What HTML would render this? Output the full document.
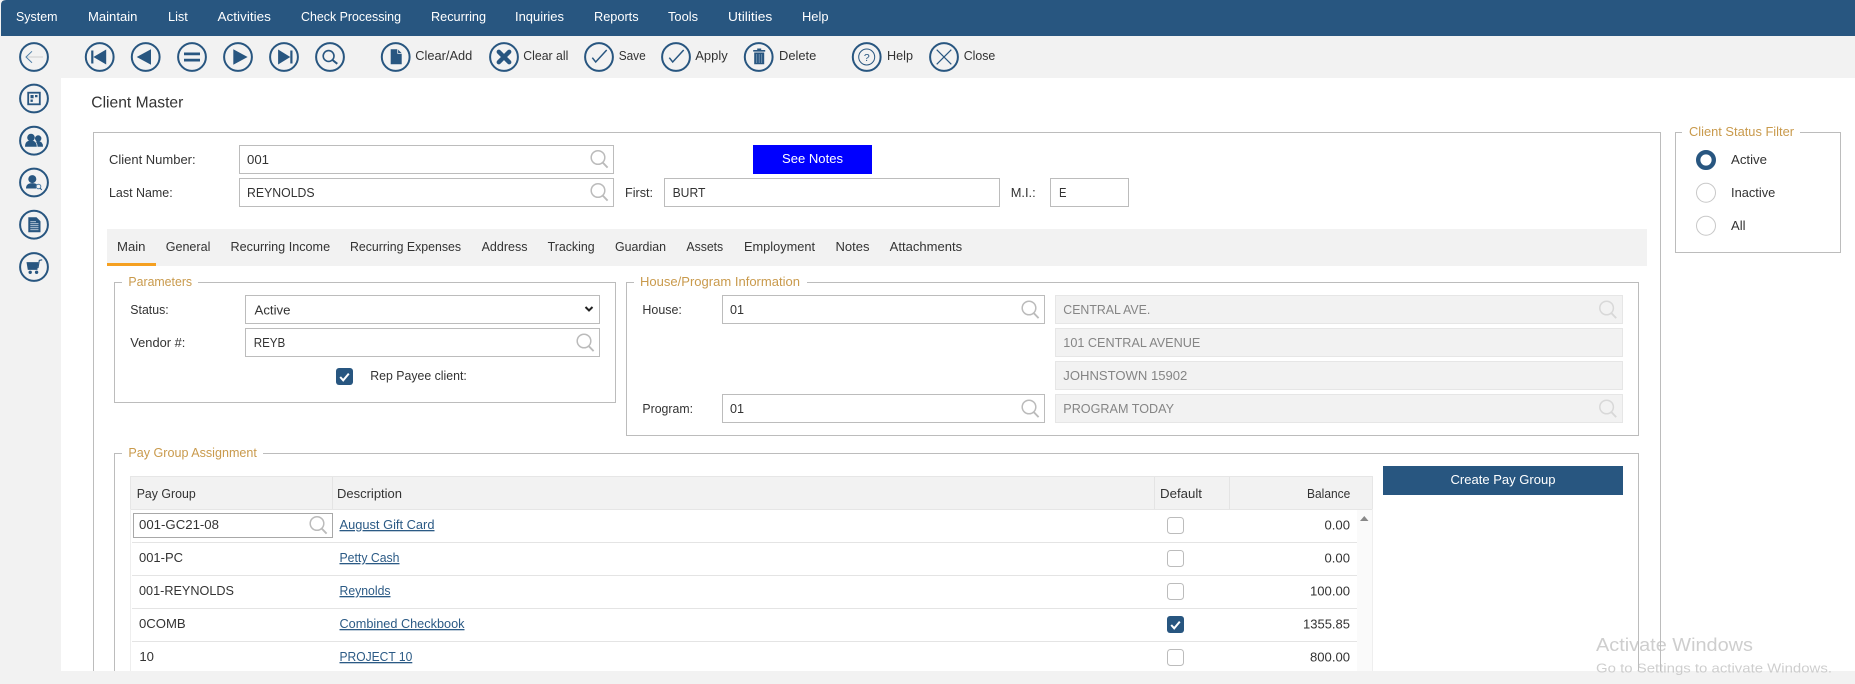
<!DOCTYPE html>
<html lang="en">
<head>
<meta charset="utf-8">
<title>Client Master</title>
<style>
html,body{margin:0;padding:0;width:1855px;height:684px;overflow:hidden;background:#f2f2f2}
svg{display:block}
text{font-family:"Liberation Sans",Arial,sans-serif;font-size:13px;fill:#333}
.m text{fill:#fff}
.l text{fill:#c99a4c}
.g text{fill:#858585}
.u{text-decoration:underline;fill:#2b5a85}
.b{fill:#fff;stroke:#bcbcbc;stroke-width:1}
.d{fill:#f2f2f2;stroke:#e6e6e6;stroke-width:1}
.c{fill:none;stroke:#285680;stroke-width:2}
.q{fill:#285680}
</style>
</head>
<body>
<svg xmlns="http://www.w3.org/2000/svg" width="1855" height="684" viewBox="0 0 1855 684">
<defs>
<g id="ci"><circle r="13.9" class="c"/></g>
<g id="mag" fill="none" stroke="#bbb" stroke-width="1.5"><circle cx="-1" cy="-1.5" r="6.8"/><path d="M3.8 3.6L8.6 8.6" stroke-width="1.9"/></g>
<g id="magd" fill="none" stroke="#d8d8d8" stroke-width="1.5"><circle cx="-1" cy="-1.5" r="6.8"/><path d="M3.8 3.6L8.6 8.6" stroke-width="1.9"/></g>
<g id="cb"><rect x=".5" y=".5" width="16" height="16" rx="3" fill="#fff" stroke="#bcbcbc"/></g>
<g id="cc"><rect width="17" height="17" rx="3" fill="#285680"/><path d="M4.2 9L7.2 12.3L12.8 5.6" fill="none" stroke="#fff" stroke-width="2"/></g>
</defs>

<rect width="1855" height="684" fill="#f2f2f2"/>
<!-- menu -->
<path d="M1 5Q1 0 6 0H1855V36H1V5Z" fill="#285680"/>
<g class="m">
<text x="16" y="21" textLength="41.5" lengthAdjust="spacingAndGlyphs">System</text>
<text x="88" y="21" textLength="49.4" lengthAdjust="spacingAndGlyphs">Maintain</text>
<text x="168" y="21" textLength="19.8" lengthAdjust="spacingAndGlyphs">List</text>
<text x="217.5" y="21" textLength="53.4" lengthAdjust="spacingAndGlyphs">Activities</text>
<text x="301" y="21" textLength="100" lengthAdjust="spacingAndGlyphs">Check Processing</text>
<text x="431" y="21" textLength="55" lengthAdjust="spacingAndGlyphs">Recurring</text>
<text x="515" y="21" textLength="49" lengthAdjust="spacingAndGlyphs">Inquiries</text>
<text x="594" y="21" textLength="44.6" lengthAdjust="spacingAndGlyphs">Reports</text>
<text x="668" y="21" textLength="30" lengthAdjust="spacingAndGlyphs">Tools</text>
<text x="728" y="21" textLength="44.3" lengthAdjust="spacingAndGlyphs">Utilities</text>
<text x="802" y="21" textLength="26.5" lengthAdjust="spacingAndGlyphs">Help</text>
</g>

<!-- content area -->
<rect x="61" y="78" width="1794" height="593" fill="#fff"/>

<!-- toolbar icons -->
<g transform="translate(34,57)"><use href="#ci"/><path d="M-7 0H9" stroke="#dcdcdc" stroke-width="1.6"/><path d="M-2 -5.7L-8 0L-2 5.7" fill="none" stroke="#4f7ea6" stroke-width="1"/></g>
<g transform="translate(99.7,57)"><use href="#ci"/><path class="q" d="M-8.5-6.5H-6.3V6.5H-8.5ZM-6.3 0L6.5-7.5V7.5Z"/></g>
<g transform="translate(145.7,57)"><use href="#ci"/><path class="q" d="M-9 0L5.3-7.8V7.8Z"/></g>
<g transform="translate(192,57)"><use href="#ci"/><path class="q" d="M-8-4.5H8V-1.7H-8ZM-8 1.7H8V4.5H-8Z"/></g>
<g transform="translate(238,57)"><use href="#ci"/><path class="q" d="M-4.7-7.8L9.6 0L-4.7 7.8Z"/></g>
<g transform="translate(284,57)"><use href="#ci"/><path class="q" d="M-5.9-7.5L6.3 0V-6.5H8.5V6.5H6.3V0L-5.9 7.5Z"/></g>
<g transform="translate(330,57)"><use href="#ci"/><circle cx="-1.4" cy="-1" r="5.4" fill="none" stroke="#285680" stroke-width="1.6"/><path d="M2.5 3L7.3 6.8" stroke="#285680" stroke-width="2"/></g>
<g transform="translate(395.7,57)"><use href="#ci"/><path class="q" d="M-5-7.7H1.6V-3.2H6V7.3H-5Z"/><path class="q" d="M2.4-7.4L5.8-4H2.4Z"/></g>
<g transform="translate(504,57)"><use href="#ci"/><path d="M-5.2-5.2L5.2 5.2M5.2-5.2L-5.2 5.2" stroke="#285680" stroke-width="4.4" stroke-linecap="round"/></g>
<g transform="translate(599,57)"><use href="#ci"/><path d="M-6.7.7L-3.3 5L7.7-7" fill="none" stroke="#285680" stroke-width="1.5"/></g>
<g transform="translate(676,57)"><use href="#ci"/><path d="M-6.7.7L-3.3 5L7.7-7" fill="none" stroke="#285680" stroke-width="1.5"/></g>
<g transform="translate(758.7,57)"><use href="#ci"/><path class="q" d="M-4.5-4.5H5.5V7.3H-4.5ZM-5.5-7H-1.5V-8.5H2.5V-7H6.5V-5.4H-5.5Z"/><path d="M-2 -3V6M.5 -3V6M3 -3V6" stroke="#7f9db8" stroke-width=".8"/></g>
<g transform="translate(866.7,57)"><use href="#ci"/><circle r="8" fill="none" stroke="#285680" stroke-width="1"/><text x="-2.8" y="3.9" style="font-size:10.5px;fill:#285680">?</text></g>
<g transform="translate(944,57)"><use href="#ci"/><path d="M-7.3-7.3L7.3 7.3M7.3-7.3L-7.3 7.3" stroke="#285680" stroke-width="1.2"/></g>

<text x="415.3" y="60" textLength="57" lengthAdjust="spacingAndGlyphs">Clear/Add</text>
<text x="523.3" y="60" textLength="45" lengthAdjust="spacingAndGlyphs">Clear all</text>
<text x="618.7" y="60" textLength="27" lengthAdjust="spacingAndGlyphs">Save</text>
<text x="695.3" y="60" textLength="32.4" lengthAdjust="spacingAndGlyphs">Apply</text>
<text x="779" y="60" textLength="37.3" lengthAdjust="spacingAndGlyphs">Delete</text>
<text x="887" y="60" textLength="26" lengthAdjust="spacingAndGlyphs">Help</text>
<text x="963.7" y="60" textLength="31.6" lengthAdjust="spacingAndGlyphs">Close</text>

<!-- sidebar icons -->
<g transform="translate(34,98.5)"><use href="#ci"/><rect x="-5.8" y="-5.8" width="11.6" height="11.6" fill="none" stroke="#285680" stroke-width="1.8"/><path class="q" d="M-3.5-3.5H-.4V-.3H-3.5ZM1-3.5H3.5V-1.2H1ZM-3.5 1H-1.2V3.4H-3.5Z"/></g>
<g transform="translate(34,140.7)"><use href="#ci"/><circle cx="-3" cy="-3.2" r="3.8" class="q"/><path class="q" d="M-9 6Q-9 -.2-3 -.2Q2.5 -.2 2.8 6Z"/><circle cx="4.2" cy="-2.2" r="3.2" class="q"/><path class="q" d="M3.6 6Q3.4 2.6 1.8 1Q2.8 .5 4.4 .5Q9 .5 9 6Z"/></g>
<g transform="translate(34,182.5)"><use href="#ci"/><circle cx="-1.7" cy="-3.4" r="4" class="q"/><path class="q" d="M-8 6Q-8 .6-1.7 .6Q1.5 .6 3.2 2.2Q1.8 3.6 2 6Z"/><circle cx="4.5" cy="4" r="2.3" fill="none" stroke="#4f7ea6" stroke-width="1"/><path d="M6 5.6L7.8 7.4" stroke="#285680" stroke-width="1"/></g>
<g transform="translate(34,224.7)"><use href="#ci"/><path class="q" d="M-5.7-7.5H2.5L6.5-3.5V7.5H-5.7Z"/><path d="M-3.7-3H2M-3.7-1H4.5M-3.7 1H4.5M-3.7 3H4.5M-3.7 5H4.5" stroke="#c4d2df" stroke-width=".9"/></g>
<g transform="translate(34,267)"><use href="#ci"/><path class="q" d="M-7.5-4.9H4.4L3.4 2.9H-6.2Z"/><path d="M4 1L5.3-6.6L8.2-7.2" fill="none" stroke="#285680" stroke-width="1.1"/><circle cx="-3.8" cy="5.3" r="1.7" class="q"/><circle cx="2.6" cy="5.3" r="1.7" class="q"/></g>

<!-- title -->
<text x="91.3" y="107.3" style="font-size:16px" textLength="92" lengthAdjust="spacingAndGlyphs">Client Master</text>

<!-- main box -->
<rect x="93.5" y="132.5" width="1567" height="560" class="b"/>

<!-- header fields -->
<text x="109" y="164" textLength="86.6" lengthAdjust="spacingAndGlyphs">Client Number:</text>
<rect x="239.5" y="145.5" width="374" height="28" class="b"/>
<text x="247" y="164" textLength="22" lengthAdjust="spacingAndGlyphs">001</text>
<use href="#mag" x="599" y="159"/>
<text x="109" y="197" textLength="63.7" lengthAdjust="spacingAndGlyphs">Last Name:</text>
<rect x="239.5" y="178.5" width="374" height="28" class="b"/>
<text x="247" y="197" textLength="67.6" lengthAdjust="spacingAndGlyphs">REYNOLDS</text>
<use href="#mag" x="599" y="192"/>

<rect x="753" y="145" width="119" height="29" fill="#0000ff"/>
<text x="782" y="163" style="fill:#fff" textLength="61" lengthAdjust="spacingAndGlyphs">See Notes</text>

<text x="625" y="197" textLength="28" lengthAdjust="spacingAndGlyphs">First:</text>
<rect x="664.5" y="178.5" width="335" height="28" class="b"/>
<text x="672.6" y="197" textLength="32.8" lengthAdjust="spacingAndGlyphs">BURT</text>
<text x="1010.7" y="197" textLength="25" lengthAdjust="spacingAndGlyphs">M.I.:</text>
<rect x="1050.5" y="178.5" width="78" height="28" class="b"/>
<text x="1059" y="197" textLength="7.5" lengthAdjust="spacingAndGlyphs">E</text>

<!-- tabs -->
<rect x="107" y="229" width="1540" height="37" fill="#f2f2f2"/>
<rect x="107" y="263" width="49" height="3" fill="#f5a021"/>
<text x="117" y="251" textLength="28.5" lengthAdjust="spacingAndGlyphs">Main</text>
<text x="165.7" y="251" textLength="44.7" lengthAdjust="spacingAndGlyphs">General</text>
<text x="230.5" y="251" textLength="99.6" lengthAdjust="spacingAndGlyphs">Recurring Income</text>
<text x="350" y="251" textLength="111" lengthAdjust="spacingAndGlyphs">Recurring Expenses</text>
<text x="481.6" y="251" textLength="45.9" lengthAdjust="spacingAndGlyphs">Address</text>
<text x="547.6" y="251" textLength="47" lengthAdjust="spacingAndGlyphs">Tracking</text>
<text x="615" y="251" textLength="51" lengthAdjust="spacingAndGlyphs">Guardian</text>
<text x="686.4" y="251" textLength="36.8" lengthAdjust="spacingAndGlyphs">Assets</text>
<text x="744" y="251" textLength="71" lengthAdjust="spacingAndGlyphs">Employment</text>
<text x="835.5" y="251" textLength="34" lengthAdjust="spacingAndGlyphs">Notes</text>
<text x="889.7" y="251" textLength="72.4" lengthAdjust="spacingAndGlyphs">Attachments</text>

<!-- Parameters -->
<rect x="114.5" y="282.5" width="501" height="120" class="b"/>
<rect x="122" y="280" width="76" height="5" fill="#fff"/>
<g class="l"><text x="128.4" y="286" textLength="63.7" lengthAdjust="spacingAndGlyphs">Parameters</text></g>
<text x="130.3" y="314" textLength="38.4" lengthAdjust="spacingAndGlyphs">Status:</text>
<rect x="245.5" y="295.5" width="354" height="28" class="b"/>
<text x="254.5" y="314.5" textLength="36" lengthAdjust="spacingAndGlyphs">Active</text>
<path d="M585.5 307L589 310.5L592.5 307" fill="none" stroke="#222" stroke-width="2"/>
<text x="130.3" y="347" textLength="55" lengthAdjust="spacingAndGlyphs">Vendor #:</text>
<rect x="245.5" y="328.5" width="354" height="28" class="b"/>
<text x="253.7" y="347" textLength="31.6" lengthAdjust="spacingAndGlyphs">REYB</text>
<use href="#mag" x="585" y="342.5"/>
<use href="#cc" x="336" y="368"/>
<text x="370.3" y="380" textLength="96.5" lengthAdjust="spacingAndGlyphs">Rep Payee client:</text>

<!-- House/Program -->
<rect x="626.5" y="282.5" width="1012" height="153" class="b"/>
<rect x="634" y="280" width="173" height="5" fill="#fff"/>
<g class="l"><text x="640" y="286" textLength="160" lengthAdjust="spacingAndGlyphs">House/Program Information</text></g>
<text x="642.4" y="314" textLength="39.5" lengthAdjust="spacingAndGlyphs">House:</text>
<rect x="722.5" y="295.5" width="322" height="28" class="b"/>
<text x="730" y="314" textLength="14" lengthAdjust="spacingAndGlyphs">01</text>
<use href="#mag" x="1030" y="309.5"/>
<text x="642.4" y="413" textLength="50.6" lengthAdjust="spacingAndGlyphs">Program:</text>
<rect x="722.5" y="394.5" width="322" height="28" class="b"/>
<text x="730" y="413" textLength="14" lengthAdjust="spacingAndGlyphs">01</text>
<use href="#mag" x="1030" y="408.5"/>
<rect x="1055.5" y="295.5" width="567" height="28" class="d"/>
<rect x="1055.5" y="328.5" width="567" height="28" class="d"/>
<rect x="1055.5" y="361.5" width="567" height="28" class="d"/>
<rect x="1055.5" y="394.5" width="567" height="28" class="d"/>
<g class="g">
<text x="1063.3" y="314" textLength="87" lengthAdjust="spacingAndGlyphs">CENTRAL AVE.</text>
<text x="1063.3" y="347" textLength="137" lengthAdjust="spacingAndGlyphs">101 CENTRAL AVENUE</text>
<text x="1063.3" y="380" textLength="124" lengthAdjust="spacingAndGlyphs">JOHNSTOWN 15902</text>
<text x="1063.3" y="413" textLength="110.7" lengthAdjust="spacingAndGlyphs">PROGRAM TODAY</text>
</g>
<use href="#magd" x="1607.6" y="309.5"/>
<use href="#magd" x="1607.6" y="408.5"/>

<!-- Status filter -->
<rect x="1675.5" y="132.5" width="165" height="120" class="b"/>
<rect x="1682" y="130" width="118" height="5" fill="#fff"/>
<g class="l"><text x="1689" y="136" textLength="105" lengthAdjust="spacingAndGlyphs">Client Status Filter</text></g>
<circle cx="1706" cy="160" r="7.8" fill="#fff" stroke="#285680" stroke-width="4.4"/>
<circle cx="1706" cy="192.7" r="9.5" fill="#fff" stroke="#c8c8c8"/>
<circle cx="1706" cy="225.7" r="9.5" fill="#fff" stroke="#c8c8c8"/>
<text x="1731" y="164" textLength="36" lengthAdjust="spacingAndGlyphs">Active</text>
<text x="1731" y="197" textLength="44.3" lengthAdjust="spacingAndGlyphs">Inactive</text>
<text x="1731" y="230" textLength="14.5" lengthAdjust="spacingAndGlyphs">All</text>

<!-- Pay Group Assignment -->
<rect x="114.5" y="453.5" width="1524" height="240" class="b"/>
<rect x="122" y="451" width="141" height="5" fill="#fff"/>
<g class="l"><text x="128.4" y="457" textLength="128.5" lengthAdjust="spacingAndGlyphs">Pay Group Assignment</text></g>

<!-- table -->
<rect x="130.5" y="476.5" width="1242" height="33" fill="#f2f2f2" stroke="#e6e6e6"/>
<path d="M130.5 509V672M1372.5 509V672" stroke="#eee"/>
<rect x="1357" y="510" width="15" height="161" fill="#fafafa"/>
<path d="M332.5 477V509M1154.5 477V509M1229.5 477V509" stroke="#e4e4e4"/>
<path d="M132 542.5H1357M132 575.5H1357M132 608.5H1357M132 641.5H1357" stroke="#e4e4e4"/>
<path d="M1364.3 516L1368.5 521H1360Z" fill="#888"/>

<text x="136.7" y="498" textLength="59" lengthAdjust="spacingAndGlyphs">Pay Group</text>
<text x="337" y="498" textLength="65" lengthAdjust="spacingAndGlyphs">Description</text>
<text x="1160" y="498" textLength="42" lengthAdjust="spacingAndGlyphs">Default</text>
<text x="1307" y="498" textLength="43.3" lengthAdjust="spacingAndGlyphs">Balance</text>

<rect x="133.5" y="513.5" width="199" height="24" class="b" style="stroke:#a8a8a8"/>
<use href="#mag" x="318" y="525"/>

<text x="139" y="529" textLength="80" lengthAdjust="spacingAndGlyphs">001-GC21-08</text>
<text x="139" y="562" textLength="44" lengthAdjust="spacingAndGlyphs">001-PC</text>
<text x="139" y="595" textLength="95" lengthAdjust="spacingAndGlyphs">001-REYNOLDS</text>
<text x="139" y="628" textLength="46.7" lengthAdjust="spacingAndGlyphs">0COMB</text>
<text x="139.4" y="661" textLength="14.6" lengthAdjust="spacingAndGlyphs">10</text>

<text class="u" x="339.5" y="529" textLength="95" lengthAdjust="spacingAndGlyphs">August Gift Card</text>
<text class="u" x="339.5" y="562" textLength="60" lengthAdjust="spacingAndGlyphs">Petty Cash</text>
<text class="u" x="339.5" y="595" textLength="51" lengthAdjust="spacingAndGlyphs">Reynolds</text>
<text class="u" x="339.5" y="628" textLength="125" lengthAdjust="spacingAndGlyphs">Combined Checkbook</text>
<text class="u" x="339.5" y="661" textLength="72.8" lengthAdjust="spacingAndGlyphs">PROJECT 10</text>

<use href="#cb" x="1167" y="517"/>
<use href="#cb" x="1167" y="550"/>
<use href="#cb" x="1167" y="583"/>
<use href="#cc" x="1167" y="616"/>
<use href="#cb" x="1167" y="649"/>

<text x="1324.5" y="529.5" textLength="25.5" lengthAdjust="spacingAndGlyphs">0.00</text>
<text x="1324.5" y="562.5" textLength="25.5" lengthAdjust="spacingAndGlyphs">0.00</text>
<text x="1310" y="595.5" textLength="40" lengthAdjust="spacingAndGlyphs">100.00</text>
<text x="1303" y="628.5" textLength="47" lengthAdjust="spacingAndGlyphs">1355.85</text>
<text x="1310" y="661.5" textLength="40" lengthAdjust="spacingAndGlyphs">800.00</text>

<rect x="1383" y="466" width="240" height="29" fill="#285680"/>
<text x="1450.5" y="484" style="fill:#fff" textLength="105" lengthAdjust="spacingAndGlyphs">Create Pay Group</text>

<!-- bottom band -->
<rect x="0" y="671" width="1855" height="13" fill="#f2f2f2"/>

<!-- watermark -->
<text x="1596" y="651" style="font-size:18px;fill:#bdbdbd;fill-opacity:.75" textLength="157" lengthAdjust="spacingAndGlyphs">Activate Windows</text>
<text x="1596" y="672.5" style="font-size:13px;fill:#bdbdbd;fill-opacity:.75" textLength="236" lengthAdjust="spacingAndGlyphs">Go to Settings to activate Windows.</text>
</svg>
</body>
</html>
